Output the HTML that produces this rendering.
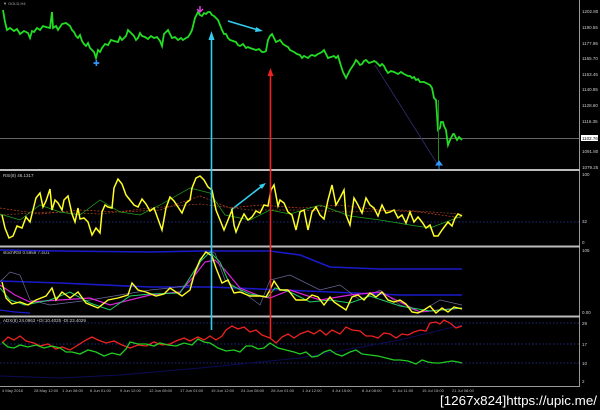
<!DOCTYPE html>
<html><head><meta charset="utf-8"><style>
html,body{margin:0;padding:0;background:#000;width:600px;height:410px;overflow:hidden}
svg{display:block}
text{font-family:"Liberation Sans",sans-serif}
</style></head><body>
<svg width="600" height="410" viewBox="0 0 600 410" xmlns="http://www.w3.org/2000/svg">
<rect width="600" height="410" fill="#000"/>
<line x1="579.5" y1="0" x2="579.5" y2="386" stroke="#999" stroke-width="1"/>
<line x1="0" y1="386.5" x2="580" y2="386.5" stroke="#999" stroke-width="1"/>
<line x1="0" y1="138.5" x2="580" y2="138.5" stroke="#888" stroke-width="0.8"/>
<rect x="0" y="169" width="580" height="2" fill="#bbb"/>
<rect x="0" y="245.5" width="580" height="2" fill="#bbb"/>
<rect x="0" y="315.5" width="580" height="2" fill="#bbb"/>
<text x="3" y="5" fill="#aaa" font-size="4">▼ GOLD,H4</text>

<g fill="#ccc" font-size="4.5">
<text x="582" y="13">1202.80</text><text x="582" y="29">1190.55</text><text x="582" y="45">1177.95</text>
<text x="582" y="60">1165.70</text><text x="582" y="76">1153.45</text><text x="582" y="91">1140.85</text>
<text x="582" y="107">1128.60</text><text x="582" y="123">1116.35</text>
<text x="582" y="153">1091.80</text><text x="582" y="169">1079.25</text>
<text x="582" y="176">100</text><text x="582" y="223">32</text><text x="582" y="244">0</text>
<text x="582" y="252">105</text><text x="582" y="314">0.00</text>
<text x="582" y="325">29</text><text x="582" y="346">17</text><text x="582" y="365">10</text><text x="582" y="383">2</text>
</g>
<rect x="581" y="135" width="17" height="6" fill="#fff"/>
<text x="582" y="140" fill="#000" font-size="4.5">1102.76</text>

<polyline fill="none" stroke="#22dd22" stroke-width="1.8" points="3,10 5,22 7,30 10,28 14,31 17,29 20,34 24,31 28,33 30,38 32,31 34,32 37,28 40,30 43,26 46,27 50,28 52,12 53,28 56,26 58,30 62,24 66,23 70,26 72,30 74,32 76,36 78,38 80,35 82,41 84,44 86,46 88,43 90,48 92,50 94,52 96,58 98,50 100,52 102,48 105,44 108,45 111,40 114,41 118,42 120,37 122,40 124,38 126,36 128,30 130,32 132,34 134,36 136,40 138,38 140,33 142,36 145,37 148,39 151,36 154,38 157,37 160,41 162,46 164,34 166,32 168,30 170,34 172,38 175,37 178,40 181,38 183,40 186,38 188,37 190,34 192,30 194,22 195,18 197,14 198,12 200,15 202,16 204,13 206,14 208,12 210,12 212,15 214,16 216,18 218,20 220,25 222,30 224,34 226,34 228,38 230,40 233,41 236,42 238,45 240,46 243,44 246,48 248,47 250,48 253,49 256,50 259,49 262,52 264,52 266,51 268,40 270,36 272,34 274,38 276,42 278,41 280,40 283,44 286,46 288,47 290,50 292,51 294,52 297,54 300,55 302,58 304,56 306,57 308,58 310,56 312,55 315,56 318,54 320,53 322,52 324,50 326,54 328,58 331,57 334,56 336,58 338,56 341,66 343,72 345,76 346,78 348,74 350,70 352,67 354,64 356,60 358,62 360,65 362,64 364,61 366,60 369,63 372,62 374,61 376,62 378,64 380,66 382,64 384,66 386,70 388,73 391,71 394,72 396,73 398,74 401,72 404,74 406,75 408,76 410,76 412,78 414,77 416,80 418,79 420,82 424,82 428,84 430,85 432,88 434,98 436,100 437,115 438,130 440,128 441,122 443,122 444,126 446,130 447,138 448,145 450,140 451,138 453,134 454,134 456,138 457,140 459,137 460,138 462,140"/>
<line x1="375" y1="65" x2="438" y2="165" stroke="#3a2a70" stroke-width="0.8"/>
<line x1="438.5" y1="100" x2="438.5" y2="165" stroke="#1a8a1a" stroke-width="1"/>
<text x="93" y="66" fill="#3399ff" font-size="8">✚</text>
<path d="M439,161 l-3,4 h6 z M439,164 v5" stroke="#3399ff" fill="#3399ff"/>
<path d="M200,6 v6 M197,9 l3,3 l3,-3" stroke="#e040e0" stroke-width="1.5" fill="none"/>

<line x1="228" y1="21" x2="258" y2="30" stroke="#33ccee" stroke-width="1.6"/>
<path d="M263,31 l-7,-4 l-1,5 z" fill="#33ccee"/>
<line x1="231" y1="210" x2="262" y2="186" stroke="#33ccee" stroke-width="1.6"/>
<path d="M266,183 l-7,2 l3,4 z" fill="#33ccee"/>

<text x="3" y="177" fill="#ccc" font-size="4.5">RSI(8) 46.1317</text>
<line x1="0" y1="222" x2="580" y2="222" stroke="#2a3aaa" stroke-width="0.7" stroke-dasharray="1.5,2"/>
<polyline fill="none" stroke="#cc4422" stroke-width="0.7" stroke-dasharray="2,1.5" points="0,208 40,214 80,210 120,212 160,210 200,196 230,208 260,205 300,208 340,205 380,210 420,212 462,218"/>
<polyline fill="none" stroke="#994422" stroke-width="0.7" stroke-dasharray="2,1.5" points="0,215 50,212 100,214 150,208 200,204 250,210 300,210 350,212 400,210 462,214"/>
<polyline fill="none" stroke="#22aa22" stroke-width="0.7" points="0,214 20,220 40,205 60,212 80,215 100,200 120,212 140,215 160,205 190,188 210,193 225,215 250,220 270,210 290,214 320,205 350,216 380,220 410,225 430,228 462,216"/>
<polyline fill="none" stroke="#ffff22" stroke-width="1.5" points="2,215 5,228 9,238 13,236 17,226 22,228 26,217 30,222 33,210 36,198 40,193 43,207 46,201 50,189 52,210 55,200 58,203 62,210 64,200 68,196 72,214 75,222 78,208 80,219 84,218 88,222 92,235 96,228 100,233 102,212 105,205 108,207 112,208 114,188 118,179 122,184 126,195 130,200 134,205 138,207 142,199 146,204 150,211 154,208 158,219 162,230 166,208 170,197 174,201 178,207 182,213 186,203 190,200 192,188 196,178 200,176 204,180 208,187 212,190 216,210 220,220 224,230 228,220 232,210 234,225 236,232 240,222 244,214 248,220 252,217 256,211 260,213 264,205 268,206 271,190 274,185 278,206 280,200 284,203 288,212 292,215 296,230 300,212 304,210 308,230 312,212 316,207 320,215 324,219 328,200 332,185 336,205 340,198 344,190 346,215 350,225 354,198 358,205 362,213 366,198 370,205 374,208 378,216 382,205 386,213 390,212 394,210 398,218 402,215 406,223 410,212 414,222 418,217 422,222 426,228 430,225 434,236 438,236 442,230 445,226 448,222 452,226 455,218 458,214 462,216"/>

<text x="3" y="254" fill="#ccc" font-size="4.5">stochRSI 0.5959 7.4U1</text>
<polyline fill="none" stroke="#1a1acc" stroke-width="1.6" points="0,250 60,251 150,252 200,251 270,251 300,255 330,267 380,269 462,269"/>
<polyline fill="none" stroke="#1a1acc" stroke-width="1.6" points="0,281 60,283 150,287 210,287 260,289 330,292 400,295 462,295"/>
<polyline fill="none" stroke="#1a1acc" stroke-width="1.2" points="0,310 15,312 30,313"/>
<polyline fill="none" stroke="#6a6a9a" stroke-width="0.7" points="0,282 10,272 20,275 30,300 50,305 90,300 120,295 150,290 170,288 190,285 205,252 215,253 225,280 240,290 260,305 270,280 290,275 320,290 340,285 360,300 380,290 400,305 420,312 440,300 462,305"/>
<polyline fill="none" stroke="#dd22dd" stroke-width="1.2" points="0,285 15,295 30,302 60,300 90,298 110,305 150,295 180,292 195,275 205,262 215,260 225,270 240,288 260,296 270,298 290,290 320,300 350,295 380,292 400,302 420,312 440,310 462,308"/>
<polyline fill="none" stroke="#22cc66" stroke-width="1" points="0,288 10,300 25,305 50,300 70,292 90,303 110,310 130,296 150,294 180,293 200,262 210,252 220,262 230,285 250,294 268,297 275,288 290,292 310,302 330,300 350,303 370,296 400,306 430,311 462,308"/>
<polyline fill="none" stroke="#ffff22" stroke-width="1.4" points="2,282 6,298 12,304 20,302 28,305 36,300 46,296 52,288 56,300 62,292 70,298 78,292 86,303 98,308 108,300 118,298 128,295 132,283 138,290 146,292 156,296 164,294 170,288 176,292 182,296 190,290 195,272 200,260 206,252 212,256 216,268 222,283 228,280 234,293 240,292 250,296 260,296 266,297 270,290 274,281 280,290 288,290 296,300 306,300 312,295 318,297 324,305 330,297 334,302 340,306 346,310 352,297 358,295 364,300 370,293 376,297 382,292 388,300 394,302 400,300 406,304 412,312 418,313 424,310 430,306 436,313 442,308 448,312 454,307 462,309"/>

<text x="3" y="322" fill="#ccc" font-size="4.5">ADX(8) 24.0963 +DI:10.4025 -DI:23.4029</text>
<g stroke="#2a3aaa" stroke-width="0.7" stroke-dasharray="1.5,2">
<line x1="0" y1="323" x2="580" y2="323"/><line x1="0" y1="344" x2="580" y2="344"/><line x1="0" y1="363" x2="580" y2="363"/></g>
<polyline fill="none" stroke="#0c0c55" stroke-width="1" points="0,376 60,378 120,375 200,368 300,358 400,340 462,325"/>
<polyline fill="none" stroke="#ee2222" stroke-width="1.3" points="2,343 8,337 14,340 20,336 26,341 34,343 40,346 48,344 56,349 62,347 70,350 78,345 86,340 92,337 98,340 106,343 114,341 122,345 130,348 138,345 146,346 154,342 162,345 170,344 176,341 184,338 190,341 198,337 204,340 210,336 216,340 222,336 226,330 232,326 238,329 244,327 250,332 256,330 262,335 270,338 276,343 282,337 288,334 294,338 300,334 308,331 314,334 320,330 326,335 332,330 340,334 346,327 352,330 360,331 366,336 372,336 378,338 384,333 390,334 396,338 402,334 408,335 414,332 420,330 426,331 430,323 436,322 440,324 444,320 450,323 456,328 462,326"/>
<polyline fill="none" stroke="#22cc22" stroke-width="1.3" points="2,342 8,347 14,348 20,345 28,347 36,345 44,348 52,346 60,348 66,352 72,352 80,354 88,350 96,352 104,356 112,353 120,355 126,349 130,342 138,344 146,344 154,346 160,343 168,345 176,346 184,343 192,345 198,339 204,342 210,343 218,348 226,351 234,350 240,352 246,346 252,346 258,349 264,348 270,343 278,348 286,350 294,352 300,354 306,352 312,357 318,356 324,352 330,350 336,354 342,356 350,352 356,350 362,354 370,355 378,356 386,358 394,360 400,360 408,361 416,364 422,360 428,362 434,363 440,363 446,362 452,361 458,362 462,363"/>

<line x1="211.5" y1="40" x2="211.5" y2="330" stroke="#33ccee" stroke-width="1.6"/>
<path d="M211.5,31 l-3,9 h6 z" fill="#33ccee"/>
<line x1="270.5" y1="76" x2="270.5" y2="338" stroke="#ee2222" stroke-width="1.6"/>
<path d="M270.5,68 l-3,8 h6 z" fill="#ee2222"/>

<g fill="#bbb" font-size="4">
<text x="2" y="392">4 May 2018</text><text x="34" y="392">28 May 12:00</text><text x="62" y="392">1 Jun 08:00</text>
<text x="90" y="392">6 Jun 01:00</text><text x="120" y="392">9 Jun 12:00</text><text x="149" y="392">12 Jun 08:00</text>
<text x="180" y="392">17 Jun 01:00</text><text x="211" y="392">19 Jun 12:00</text><text x="241" y="392">24 Jun 08:00</text>
<text x="271" y="392">28 Jun 01:00</text><text x="302" y="392">1 Jul 12:00</text><text x="332" y="392">4 Jul 15:00</text>
<text x="362" y="392">8 Jul 08:00</text><text x="392" y="392">11 Jul 11:00</text><text x="422" y="392">15 Jul 15:00</text><text x="452" y="392">21 Jul 08:00</text>
</g>
<text x="440" y="405" fill="#fff" font-size="12.5" font-family="Liberation Mono,monospace" textLength="157" lengthAdjust="spacingAndGlyphs">[1267x824]https://upic.me/</text>
</svg>
</body></html>
